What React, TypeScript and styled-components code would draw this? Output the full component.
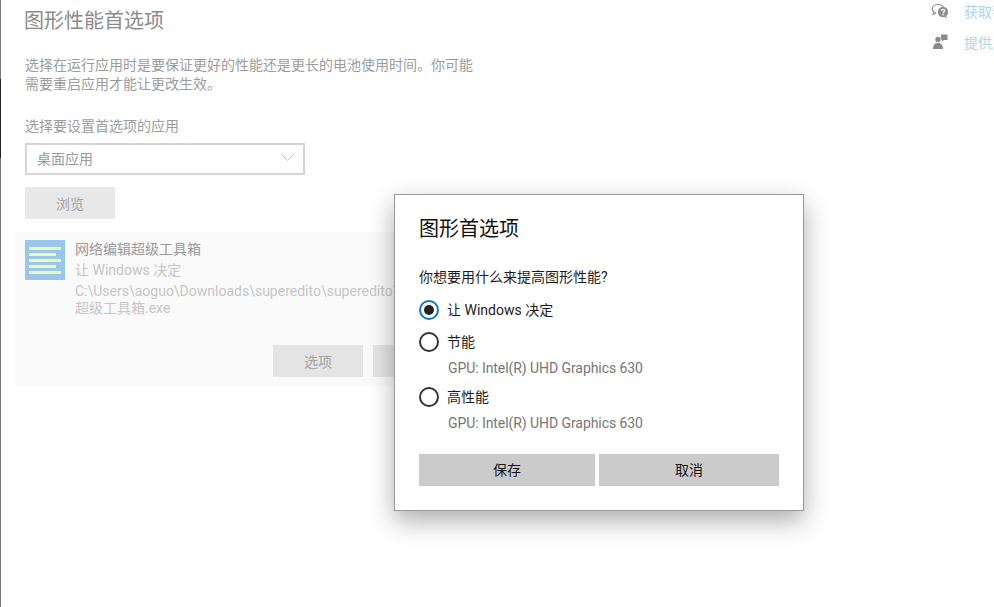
import React from 'react';
import styled, { createGlobalStyle } from 'styled-components';

const GlobalStyle = createGlobalStyle`
  html, body { margin: 0; padding: 0; background: #fff; }
  body { font-family: Roboto, "Noto Sans CJK SC", sans-serif; }
`;

const Page = styled.div`
  position: relative;
  width: 994px;
  height: 607px;
  display: flex;
  overflow: hidden;
  background: #fff;
`;

const Edge = styled.div`
  width: 1px;
  flex: none;
  background: linear-gradient(#7a7a7a 0, #7a7a7a 13%, #222 13%, #222 26%, #777 26%, #777 100%);
`;

const Main = styled.main`
  width: 472px;
  flex: none;
  padding: 8px 0 0 24px;
  display: flex;
  flex-direction: column;
  align-items: flex-start;
`;

const Title = styled.h1`
  margin: 0;
  font-size: 20px;
  font-weight: 400;
  line-height: 27px;
  color: #8b8b8b;
  margin-left: -1px;
`;

const Description = styled.p`
  margin: 21px 0 0;
  width: 450px;
  font-size: 14px;
  line-height: 19px;
  color: #9c9c9c;
`;

const FieldLabel = styled.div`
  margin-top: 23px;
  font-size: 14px;
  line-height: 19px;
  color: #9c9c9c;
`;

const Select = styled.div`
  margin-top: 7px;
  width: 280px;
  height: 32px;
  box-sizing: border-box;
  border: 2px solid #d6d6d6;
  padding: 0 10px 2px;
  display: flex;
  align-items: center;
  justify-content: space-between;
  font-size: 14px;
  color: #999;
`;

const Chevron = styled.svg`
  width: 13px;
  height: 8px;
  margin-right: -1px;
  fill: none;
  stroke: #c4c4c4;
  stroke-width: 1;
`;

const GhostButton = styled.div`
  width: 90px;
  height: 32px;
  box-sizing: border-box;
  padding-bottom: 1px;
  flex: none;
  display: flex;
  align-items: center;
  justify-content: center;
  background: ${(p: { $tone?: string }) => p.$tone || '#e8e8e8'};
  font-size: 14px;
  color: #a3a3a3;
`;

const BrowseRow = styled.div`
  margin-top: 12px;
`;

const AppCard = styled.section`
  margin: 13px 0 0 -10px;
  width: 458px;
  height: 154px;
  box-sizing: border-box;
  padding: 8px 10px;
  background: #fafafa;
  display: flex;
  flex-direction: column;
`;

const AppRow = styled.div`
  display: flex;
  gap: 10px;
`;

const AppInfo = styled.div`
  width: 340px;
  flex: none;
`;

const AppName = styled.div`
  font-size: 14px;
  line-height: 19px;
  color: #999;
`;

const AppLine = styled.div`
  margin-top: 2px;
  font-size: 14px;
  line-height: 19px;
  color: #c4c4c4;
`;

const AppPath = styled.div`
  margin-top: 3px;
  font-size: 14px;
  line-height: 17px;
  color: #c6c6c6;
  white-space: nowrap;
`;

const CardActions = styled.div`
  margin-top: auto;
  padding-bottom: 1px;
  display: flex;
  justify-content: flex-end;
  gap: 10px;
`;

const Aside = styled.aside`
  margin-left: auto;
  width: 63px;
  flex: none;
  padding-top: 1px;
  display: flex;
  flex-direction: column;
  gap: 11px;
  overflow: hidden;
`;

const HelpLink = styled.div`
  height: 20px;
  display: flex;
  align-items: center;
  gap: 15px;
  font-size: 14px;
  color: #a9d5ef;
  white-space: nowrap;
`;

const HelpIcon = styled.svg`
  width: 18px;
  height: 18px;
  flex: none;
`;

const Modal = styled.div`
  position: absolute;
  left: 394px;
  top: 194px;
  width: 410px;
  height: 317px;
  box-sizing: border-box;
  border: 1px solid #9a9a9a;
  background: #fff;
  padding: 19px 24px 0;
  box-shadow: 0 10px 24px rgba(0, 0, 0, 0.32);
  display: flex;
  flex-direction: column;
`;

const ModalTitle = styled.h2`
  margin: 0;
  font-size: 20px;
  font-weight: 400;
  line-height: 30px;
  color: #111;
`;

const Question = styled.div`
  margin-top: 23px;
  font-size: 14px;
  line-height: 20px;
  color: #1c1c1c;
`;

const Option = styled.div`
  margin-top: ${(p: { $gap: number }) => p.$gap}px;
  height: 20px;
  display: flex;
  align-items: center;
  gap: 8px;
  font-size: 14px;
  color: #1c1c1c;
`;

const OptionLabel = styled.span`
  margin-bottom: 2px;
`;

const Radio = styled.span<{ $on?: boolean }>`
  width: 20px;
  height: 20px;
  box-sizing: border-box;
  border-radius: 50%;
  border: 2px solid ${(p) => (p.$on ? '#0f79b6' : '#333')};
  display: flex;
  align-items: center;
  justify-content: center;
  &::after {
    content: '';
    display: ${(p) => (p.$on ? 'block' : 'none')};
    width: 10px;
    height: 10px;
    border-radius: 50%;
    background: #222;
  }
`;

const Gpu = styled.div`
  margin: 6px 0 0 29px;
  font-size: 14px;
  line-height: 20px;
  letter-spacing: -0.07px;
  color: #767676;
`;

const ModalActions = styled.div`
  margin-top: 21px;
  display: flex;
  gap: 4px;
`;

const DialogButton = styled.div<{ $w: number }>`
  width: ${(p) => p.$w}px;
  height: 32px;
  box-sizing: border-box;
  padding-bottom: 3px;
  background: #cbcbcb;
  display: flex;
  align-items: center;
  justify-content: center;
  font-size: 14px;
  color: #151515;
`;

const AppIcon = () => (
  <svg width="40" height="40" viewBox="0 0 40 40" style={{ flex: 'none' }}>
    <rect width="40" height="40" fill="#98c6ec" />
    <rect x="4" y="7" width="32" height="3" fill="#eef9b4" />
    <rect x="4" y="13" width="27" height="3" fill="#eef9b4" />
    <rect x="4" y="19" width="32" height="3" fill="#eef9b4" />
    <rect x="4" y="25" width="27" height="3" fill="#eef9b4" />
    <rect x="4" y="31" width="32" height="3" fill="#eef9b4" />
  </svg>
);

export default function App() {
  return (
    <>
      <GlobalStyle />
      <Page>
        <Edge />
        <Main>
          <Title>图形性能首选项</Title>
          <Description>
            选择在运行应用时是要保证更好的性能还是更长的电池使用时间。你可能需要重启应用才能让更改生效。
          </Description>
          <FieldLabel>选择要设置首选项的应用</FieldLabel>
          <Select>
            桌面应用
            <Chevron viewBox="0 0 13 8">
              <path d="M0.5 0.5 L6.5 6.5 L12.5 0.5" />
            </Chevron>
          </Select>
          <BrowseRow>
            <GhostButton>浏览</GhostButton>
          </BrowseRow>
          <AppCard>
            <AppRow>
              <AppIcon />
              <AppInfo>
                <AppName>网络编辑超级工具箱</AppName>
                <AppLine>让 Windows 决定</AppLine>
                <AppPath>
                  C:\Users\aoguo\Downloads\superedito\superedito\
                  <br />
                  超级工具箱.exe
                </AppPath>
              </AppInfo>
            </AppRow>
            <CardActions>
              <GhostButton $tone="#e4e4e4">选项</GhostButton>
              <GhostButton $tone="#e4e4e4">删除</GhostButton>
            </CardActions>
          </AppCard>
        </Main>
        <Aside>
          <HelpLink>
            <HelpIcon viewBox="0 0 18 18">
              <path d="M7 2.5c-3.2 0-5.8 1.7-5.8 4.2 0 1.3.7 2.4 1.8 3.2L2.2 12.2l3-1.6" fill="none" stroke="#8f8f8f" strokeWidth="1.2" />
              <path d="M7 2.5c2.4 0 4.6 1 5.4 2.6" fill="none" stroke="#8f8f8f" strokeWidth="1.2" />
              <circle cx="12" cy="10" r="5.2" fill="#8f8f8f" />
              <path d="M14.5 13.8l2 2.8-3.5-1.8z" fill="#8f8f8f" />
              <path d="M10.4 8.8c.2-1.8 3.2-1.8 3.2 0 0 1.1-1.5 1.2-1.5 2.4" fill="none" stroke="#fff" strokeWidth="1.2" />
              <rect x="11.5" y="12" width="1.3" height="1.3" fill="#fff" />
            </HelpIcon>
            获取帮助
          </HelpLink>
          <HelpLink>
            <HelpIcon viewBox="0 0 18 18">
              <circle cx="7" cy="6.5" r="2.7" fill="#8a8a8a" />
              <path d="M2 16c0-4 2-6 5-6s5 2 5 6z" fill="#8a8a8a" />
              <path d="M10 1.5h6.5V7H13l-2 1.6V6.5h-1z" fill="#8a8a8a" />
            </HelpIcon>
            提供反馈
          </HelpLink>
        </Aside>
        <Modal>
          <ModalTitle>图形首选项</ModalTitle>
          <Question>你想要用什么来提高图形性能?</Question>
          <Option $gap={13}>
            <Radio $on />
            <OptionLabel>让 Windows 决定</OptionLabel>
          </Option>
          <Option $gap={12}>
            <Radio />
            <OptionLabel>节能</OptionLabel>
          </Option>
          <Gpu>GPU: Intel(R) UHD Graphics 630</Gpu>
          <Option $gap={9}>
            <Radio />
            <OptionLabel>高性能</OptionLabel>
          </Option>
          <Gpu>GPU: Intel(R) UHD Graphics 630</Gpu>
          <ModalActions>
            <DialogButton $w={176}>保存</DialogButton>
            <DialogButton $w={180}>取消</DialogButton>
          </ModalActions>
        </Modal>
      </Page>
    </>
  );
}
